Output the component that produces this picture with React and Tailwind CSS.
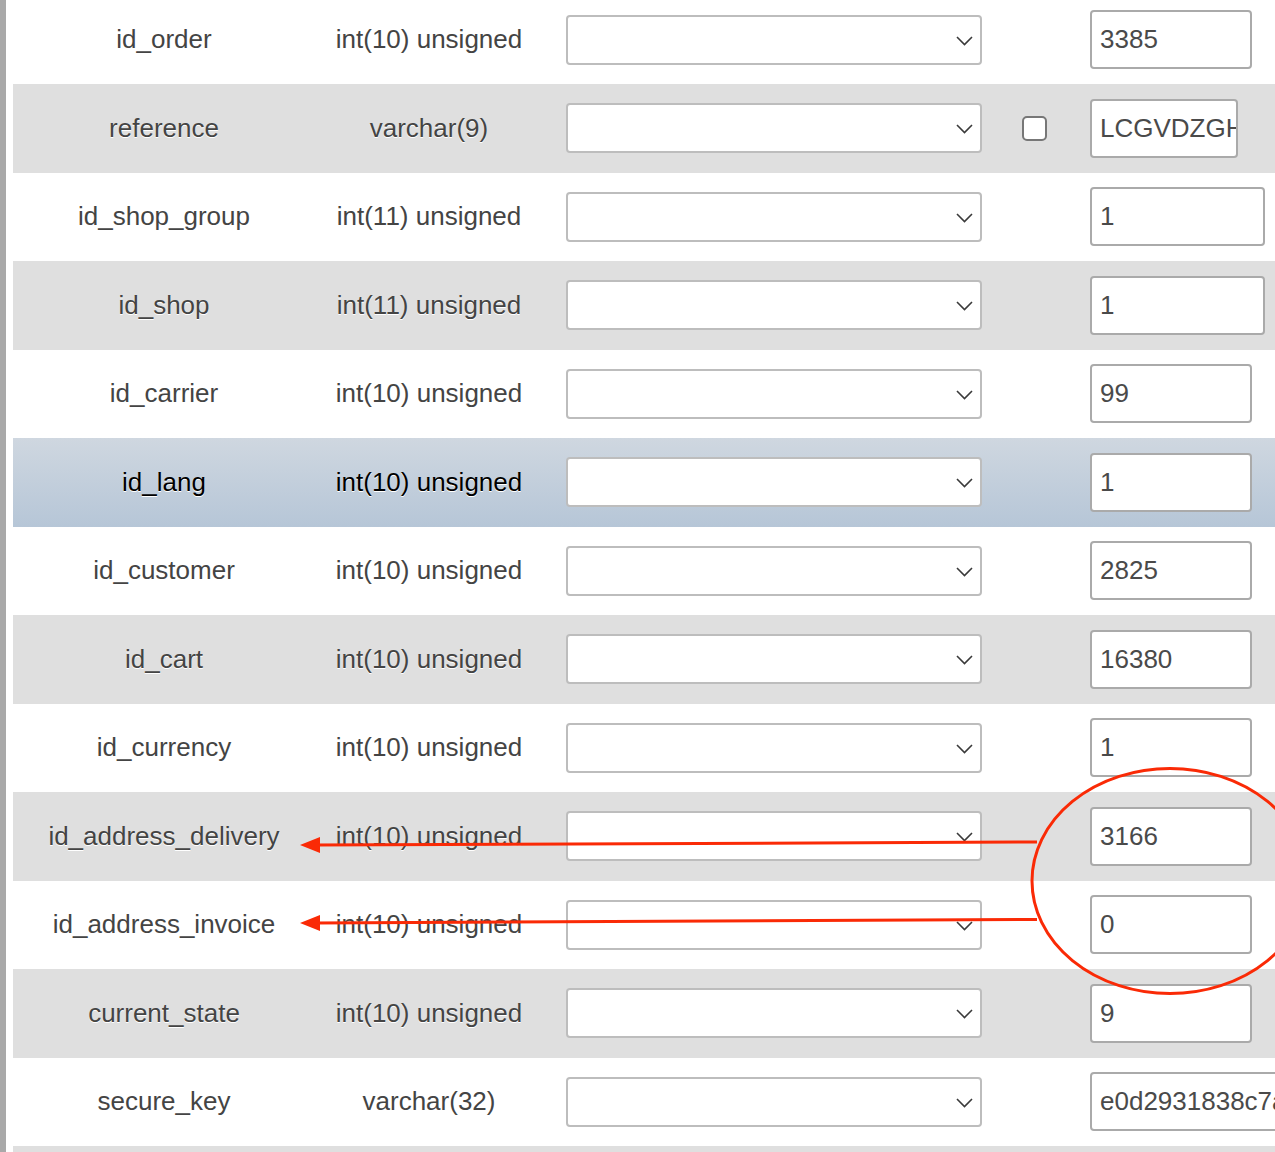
import React from "react";

const rows = [
  { name: "id_order", type: "int(10) unsigned", value: "3385", w: "w-[162px]" },
  { name: "reference", type: "varchar(9)", value: "LCGVDZGHF", w: "w-[148px]", nullable: true },
  { name: "id_shop_group", type: "int(11) unsigned", value: "1", w: "w-[175px]" },
  { name: "id_shop", type: "int(11) unsigned", value: "1", w: "w-[175px]" },
  { name: "id_carrier", type: "int(10) unsigned", value: "99", w: "w-[162px]" },
  { name: "id_lang", type: "int(10) unsigned", value: "1", w: "w-[162px]", hover: true },
  { name: "id_customer", type: "int(10) unsigned", value: "2825", w: "w-[162px]" },
  { name: "id_cart", type: "int(10) unsigned", value: "16380", w: "w-[162px]" },
  { name: "id_currency", type: "int(10) unsigned", value: "1", w: "w-[162px]" },
  { name: "id_address_delivery", type: "int(10) unsigned", value: "3166", w: "w-[162px]" },
  { name: "id_address_invoice", type: "int(10) unsigned", value: "0", w: "w-[162px]" },
  { name: "current_state", type: "int(10) unsigned", value: "9", w: "w-[162px]" },
  { name: "secure_key", type: "varchar(32)", value: "e0d2931838c7a4f2b1e9", w: "w-[330px]" },
];

function Row({ r, i }) {
  const bg = r.hover
    ? "bg-gradient-to-b from-[#cfd7e0] to-[#b6c6d7] text-black"
    : i % 2 === 1
    ? "bg-[#dfdfdf] text-[#444]"
    : "bg-white text-[#444]";
  return (
    <div className={`flex items-center h-[88.5px] shrink-0 ${bg}`}>
      <div className="w-[302px] shrink-0 text-center [text-shadow:0_1px_0_#fff]">{r.name}</div>
      <div className="w-[228px] shrink-0 text-center [text-shadow:0_1px_0_#fff]">{r.type}</div>
      <div className="pl-[23px] shrink-0">
        <div className="relative w-[416px] h-[50px]">
          <select className="appearance-none w-full h-full bg-white border-2 border-[#bdbdbd] rounded-[4px] outline-none">
            <option value=""></option>
          </select>
          <svg
            className="absolute right-[9px] top-[21px] pointer-events-none"
            width="17"
            height="10"
            viewBox="0 0 17 10"
            fill="none"
          >
            <polyline points="1,1 8.5,8.5 16,1" stroke="#3a3a3a" strokeWidth="1.6" />
          </svg>
        </div>
      </div>
      <div className="w-[108px] shrink-0 flex justify-center pr-[3px]">
        {r.nullable && (
          <div className="w-[25px] h-[25px] bg-white border-2 border-[#777] rounded-[5px]" />
        )}
      </div>
      <input
        readOnly
        value={r.value}
        className={`${r.w} h-[59px] shrink-0 bg-white border-2 border-[#aaa] rounded-[4px] pl-[8px] text-[#4a4a4a] outline-none`}
      />
    </div>
  );
}

export default function App() {
  return (
    <div
      className="relative w-[1275px] h-[1152px] overflow-hidden bg-white text-[26px]"
      style={{ fontFamily: '"Liberation Sans", Arial, Helvetica, sans-serif' }}
    >
      <div className="flex h-full">
        <div className="w-[6px] bg-[#a9a9a9] shrink-0" />
        <div className="ml-[7px] flex-1 flex flex-col -mt-[4.5px] min-w-0">
          {rows.map((r, i) => (
            <Row key={r.name} r={r} i={i} />
          ))}
          <div className="h-[88.5px] shrink-0 bg-[#dfdfdf]" />
        </div>
      </div>
      <svg
        className="absolute inset-0 pointer-events-none"
        width="1275"
        height="1152"
        viewBox="0 0 1275 1152"
        fill="none"
      >
        <ellipse cx="1170" cy="881" rx="138" ry="112.5" stroke="#fa2a06" strokeWidth="3" />
        <line x1="1037" y1="842" x2="316" y2="845" stroke="#fa2a06" strokeWidth="3" />
        <polygon points="300,845 320,837 320,853" fill="#fa2a06" />
        <line x1="1037" y1="919.5" x2="316" y2="923" stroke="#fa2a06" strokeWidth="3" />
        <polygon points="300,923 320,915 320,931" fill="#fa2a06" />
      </svg>
    </div>
  );
}
